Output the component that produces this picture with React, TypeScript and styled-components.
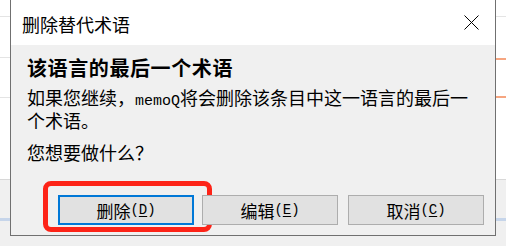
import React from "react";
import styled, { createGlobalStyle } from "styled-components";

const Global = createGlobalStyle`
  html, body { margin: 0; padding: 0; background: #f0f0f0; }
  body { font-family: "Noto Sans CJK SC", "Noto Sans", sans-serif; }
  * { box-sizing: border-box; }
`;

const Backdrop = styled.div`
  width: 506px;
  height: 246px;
  overflow: hidden;
  background:
    linear-gradient(#e4e4e4, #e4e4e4) 0 16px / 10px 1px no-repeat,
    linear-gradient(#e4e4e4, #e4e4e4) 0 57px / 10px 1px no-repeat,
    linear-gradient(#e4e4e4, #e4e4e4) 0 97px / 10px 1px no-repeat,
    linear-gradient(#e4e4e4, #e4e4e4) 496px 16px / 10px 1px no-repeat,
    linear-gradient(#f6a681, #f6a681) 496px 58px / 10px 2px no-repeat,
    linear-gradient(#f6a681, #f6a681) 496px 96px / 10px 2px no-repeat,
    linear-gradient(
      to bottom,
      #ffffff 0 179px,
      #d8d8d8 179px 180px,
      #f0f0f0 180px 218px,
      #c6d5ea 218px 221px,
      #f0f0f0 221px
    );
`;

const Dialog = styled.div`
  margin-left: 10px;
  width: 486px;
  height: 236px;
  border: 1px solid #707070;
  border-top: none;
  background: #f0f0f0;
  display: flex;
  flex-direction: column;
`;

const TitleBar = styled.div`
  height: 45px;
  background: #ffffff;
  display: flex;
  justify-content: space-between;
  align-items: flex-start;
  padding: 15px 16px 0 11px;
`;

const Title = styled.div`
  font-size: 18px;
  line-height: 18px;
  color: #000;
`;

const CloseIcon = styled.svg`
  display: block;
  width: 15px;
  height: 15px;
`;

const Content = styled.div`
  flex: 1;
  display: flex;
  flex-direction: column;
  padding: 13px 18px 0 16px;
`;

const Heading = styled.div`
  font-size: 20px;
  line-height: 20px;
  font-weight: 700;
  letter-spacing: 0.6px;
  color: #000;
`;

const Message = styled.div<{ $gap: number }>`
  margin-top: ${(p) => p.$gap}px;
  font-size: 18px;
  line-height: 18px;
  color: #000;
`;

const Latin = styled.span`
  font-family: "Liberation Mono", monospace;
  font-size: 15px;
`;

const ButtonRow = styled.div`
  margin-top: 34px;
  display: flex;
  padding-left: 31px;
`;

const ButtonSlot = styled.div<{ $after: number }>`
  position: relative;
  margin-right: ${(p) => p.$after}px;
`;

const Button = styled.button<{ $primary?: boolean }>`
  width: 136px;
  height: 30px;
  margin: 0;
  padding: 0;
  background: #e1e1e1;
  border: ${(p) => (p.$primary ? "2px solid #0078d7" : "1px solid #adadad")};
  font-family: "Noto Sans CJK SC", sans-serif;
  font-size: 17px;
  line-height: 17px;
  color: #000;
  display: flex;
  align-items: center;
  justify-content: center;
`;

const Key = styled.span`
  font-family: "Liberation Mono", monospace;
  font-size: 14px;
  u { text-underline-offset: 2px; }
`;

const Highlight = styled.div`
  position: absolute;
  left: -15px;
  top: -14px;
  width: 169px;
  height: 51px;
  border: 5px solid #fd2317;
  border-radius: 8px;
  pointer-events: none;
`;

const buttons = [
  { label: "删除", key: "D", primary: true, after: 8 },
  { label: "编辑", key: "E", primary: false, after: 10 },
  { label: "取消", key: "C", primary: false, after: 0 },
];

export default function App() {
  return (
    <>
      <Global />
      <Backdrop>
        <Dialog>
          <TitleBar>
            <Title>删除替代术语</Title>
            <CloseIcon viewBox="0 0 15 15">
              <path d="M0.5 0.5 L14.5 14.5 M14.5 0.5 L0.5 14.5" stroke="#000" strokeWidth="1" fill="none" />
            </CloseIcon>
          </TitleBar>
          <Content>
            <Heading>该语言的最后一个术语</Heading>
            <Message $gap={10}>
              如果您继续，<Latin>memoQ</Latin>将会删除该条目中这一语言的最后一个术语。
            </Message>
            <Message $gap={14}>您想要做什么？</Message>
            <ButtonRow>
              {buttons.map((b) => (
                <ButtonSlot key={b.key} $after={b.after}>
                  <Button $primary={b.primary}>
                    {b.label}
                    <Key>
                      (<u>{b.key}</u>)
                    </Key>
                  </Button>
                  {b.primary && <Highlight />}
                </ButtonSlot>
              ))}
            </ButtonRow>
          </Content>
        </Dialog>
      </Backdrop>
    </>
  );
}
